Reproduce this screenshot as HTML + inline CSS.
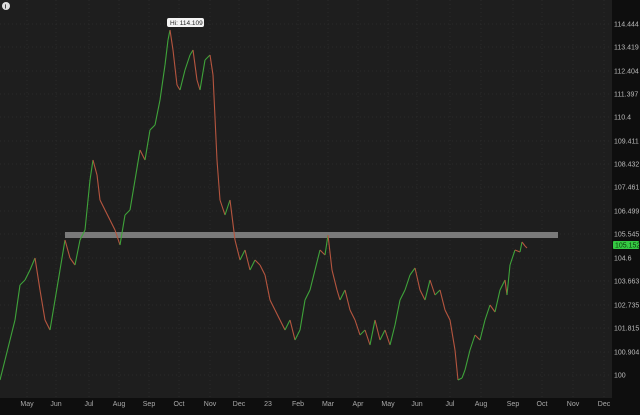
<!DOCTYPE html>
<html><head><meta charset="utf-8"><style>
html,body{margin:0;padding:0;background:#0e0e0e;}
body{width:640px;height:410px;overflow:hidden;font-family:"Liberation Sans",sans-serif;}
</style></head><body>
<svg id="s" width="640" height="410" xmlns="http://www.w3.org/2000/svg">
<rect x="0" y="0" width="640" height="410" fill="#0e0e0e"/>
<rect x="0" y="0" width="612" height="398" fill="#1e1e1e"/>
<g id="grid" stroke="#2a2a2a" stroke-width="1" stroke-dasharray="1,3"></g>
<rect x="65" y="232" width="493" height="6" fill="#7a7a7a"/>
<g id="line" stroke-width="1.1" fill="none"></g>
<g id="yl" font-size="7" fill="#bbb"></g>
<g id="xl" font-size="7" fill="#aaa"></g>
<rect x="613" y="241" width="26" height="8" rx="1" fill="#35c943"/>
<text x="615" y="247.5" font-size="7" fill="#0a3a0a">105.152</text>
<rect x="167" y="18" width="37" height="9" rx="2" fill="#f4f4f4"/>
<text x="170" y="25" font-size="6.5" fill="#222">Hi: 114.109</text>
<circle cx="6" cy="6" r="4" fill="#ddd"/>
<text x="4.8" y="8.5" font-size="6" fill="#222" font-weight="bold">i</text>
</svg>
<script>
var ns="http://www.w3.org/2000/svg",s=document.getElementById('s');
function el(p,t,a,txt){var e=document.createElementNS(ns,t);for(var k in a)e.setAttribute(k,a[k]);if(txt)e.textContent=txt;document.getElementById(p).appendChild(e);}
var yl=[["114.444",24],["113.419",47],["112.404",71],["111.397",94],["110.4",117],["109.411",141],["108.432",164],["107.461",187],["106.499",211],["105.545",234],["104.6",258],["103.663",281],["102.735",305],["101.815",328],["100.904",352],["100",375]];
yl.forEach(function(a){el('yl','text',{x:614,y:a[1]+2.5},a[0]);el('grid','line',{x1:0,x2:612,y1:a[1],y2:a[1]});});
var xl=[["May",27],["Jun",56],["Jul",89],["Aug",119],["Sep",149],["Oct",179],["Nov",210],["Dec",239],["23",268],["Feb",298],["Mar",328],["Apr",358],["May",388],["Jun",417],["Jul",450],["Aug",481],["Sep",513],["Oct",542],["Nov",573],["Dec",604]];
xl.forEach(function(a){el('xl','text',{x:a[1],y:406,'text-anchor':'middle'},a[0]);el('grid','line',{x1:a[1],x2:a[1],y1:0,y2:398});});
var p=[[0,380],[5,360],[10,340],[15,320],[20,285],[25,280],[30,270],[35,258],[40,290],[45,320],[50,330],[55,300],[60,270],[65,240],[70,258],[75,265],[80,240],[85,230],[90,180],[93,160],[97,175],[100,200],[105,210],[110,220],[115,230],[120,245],[125,215],[130,210],[135,180],[140,150],[145,160],[150,130],[155,125],[160,100],[165,65],[168,40],[170,30],[173,50],[177,85],[180,90],[185,70],[190,55],[193,50],[197,80],[200,90],[205,60],[210,55],[213,75],[217,160],[220,200],[225,215],[230,200],[235,240],[240,260],[245,250],[250,270],[255,260],[260,265],[265,275],[270,300],[275,310],[280,320],[285,330],[290,320],[295,340],[300,330],[305,300],[310,290],[315,270],[320,250],[325,255],[328,235],[332,270],[337,290],[340,300],[345,290],[350,310],[355,320],[360,335],[365,330],[370,345],[375,320],[380,340],[385,330],[390,345],[395,325],[400,300],[405,290],[410,275],[415,268],[420,290],[425,300],[430,280],[435,295],[440,290],[445,310],[450,320],[455,350],[458,380],[462,378],[465,370],[470,350],[475,335],[480,340],[485,320],[490,305],[495,312],[500,290],[505,280],[507,295],[510,265],[515,250],[520,252],[522,242],[525,246],[527,248]];
for(var i=1;i<p.length;i++){el('line','line',{x1:p[i-1][0],y1:p[i-1][1],x2:p[i][0],y2:p[i][1],stroke:p[i][1]<=p[i-1][1]?'#3fa33a':'#b5553f'});}
</script>
</body></html>
